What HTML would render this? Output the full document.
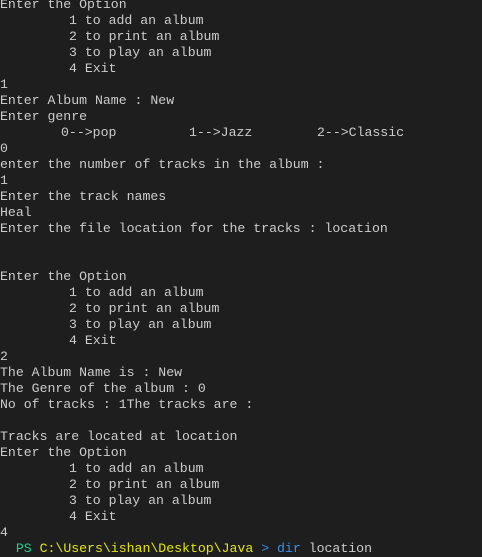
<!DOCTYPE html>
<html><head><style>
html,body{margin:0;padding:0;background:#1e1e1e;width:482px;height:543px;overflow:hidden}
#t{position:absolute;left:0;top:-3px;font-family:"Liberation Mono",monospace;font-size:13.2px;line-height:16px;color:#cccccc;white-space:pre}
.i{padding-left:69px}
</style></head><body>
<div id="t"><div>Enter the Option</div><div class="i">1 to add an album</div><div class="i">2 to print an album</div><div class="i">3 to play an album</div><div class="i">4 Exit</div><div>1</div><div>Enter Album Name : New</div><div>Enter genre</div><div><span style="position:relative;left:61px">0-->pop</span><span style="position:absolute;left:189px">1-->Jazz</span><span style="position:absolute;left:317px">2-->Classic</span></div><div>0</div><div>enter the number of tracks in the album :</div><div>1</div><div>Enter the track names</div><div>Heal</div><div>Enter the file location for the tracks : location</div><div> </div><div> </div><div>Enter the Option</div><div class="i">1 to add an album</div><div class="i">2 to print an album</div><div class="i">3 to play an album</div><div class="i">4 Exit</div><div>2</div><div>The Album Name is : New</div><div>The Genre of the album : 0</div><div>No of tracks : 1The tracks are :</div><div> </div><div>Tracks are located at location</div><div>Enter the Option</div><div class="i">1 to add an album</div><div class="i">2 to print an album</div><div class="i">3 to play an album</div><div class="i">4 Exit</div><div>4</div><div><span style="color:#23d18b">  PS</span> <span style="color:#e5e510">C:\Users\ishan\Desktop\Java</span> <span style="color:#3b8eea">&gt; dir</span> <span style="color:#cccccc">location</span></div></div>
</body></html>
